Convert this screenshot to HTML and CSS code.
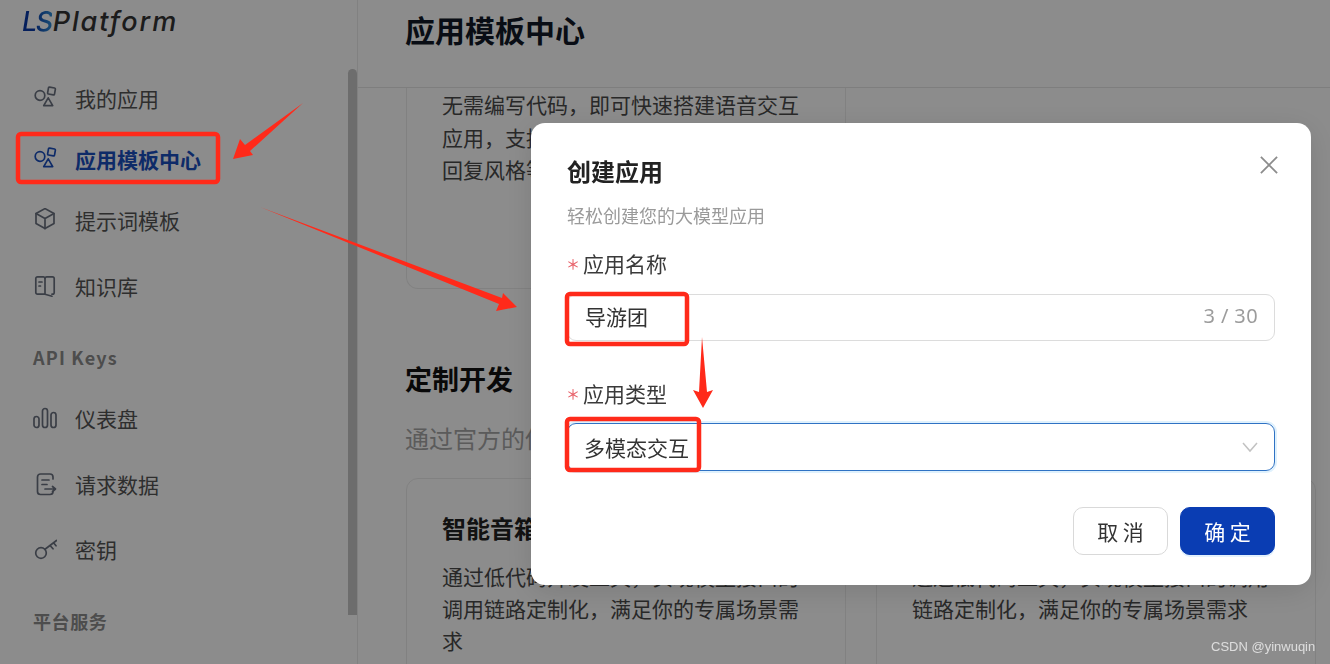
FILE: index.html
```html
<!DOCTYPE html>
<html lang="zh-CN">
<head>
<meta charset="utf-8">
<title>应用模板中心</title>
<link rel="stylesheet" href="styles.css">
</head>
<body>
<div class="app">
  <aside class="sidebar">
    <div class="logo"><span class="logo-ls">LS</span>Platform</div>
    <nav class="nav">
      <a class="item">
        <svg class="icon" viewBox="0 0 24 24"><circle cx="7" cy="9.500" r="4.800"/><rect x="15" y="1.500" width="7" height="7" rx="1" transform="rotate(10 18.500 5)"/><path d="M15.200 11.800l4.500 7.800h-9z"/></svg>
        <span>我的应用</span>
      </a>
      <a class="item active">
        <svg class="icon" viewBox="0 0 24 24"><circle cx="7" cy="9.500" r="4.800"/><rect x="15" y="1.500" width="7" height="7" rx="1" transform="rotate(10 18.500 5)"/><path d="M15.200 11.800l4.500 7.800h-9z"/></svg>
        <span>应用模板中心</span>
      </a>
      <a class="item">
        <svg class="icon" viewBox="0 0 24 24"><path d="M12 .6l9 5v10l-9 5-9-5v-10z"/><path d="M3 5.600l9 5 9-5M12 10.600v10"/></svg>
        <span>提示词模板</span>
      </a>
      <a class="item tall spaced">
        <svg class="icon" viewBox="0 0 24 24"><path d="M12 4.500c0-1 .8-1.700 1.800-1.700h5.700c1 0 1.700.7 1.700 1.700v14c0 1-.7 1.700-1.700 1.700h-.5"/><path d="M19 22.200l-7-2H4.500c-1 0-1.700-.7-1.700-1.700V4.500c0-1 .7-1.700 1.700-1.700h6c1 0 1.500.7 1.500 1.700v15.700"/><path d="M6 8h3M6 12h1.500"/></svg>
        <span>知识库</span>
      </a>
      <div class="group">API Keys</div>
      <a class="item">
        <svg class="icon" viewBox="0 0 24 24"><rect x="1" y="10.500" width="5" height="11" rx="2.500"/><rect x="9.500" y="2.500" width="5" height="19" rx="2.500"/><rect x="18" y="6.500" width="5" height="15" rx="2.500"/></svg>
        <span>仪表盘</span>
      </a>
      <a class="item tall spaced">
        <svg class="icon" viewBox="0 0 24 24"><path d="M20 7V5c0-1.700-1.300-3-3-3H7.500c-1.700 0-3 1.300-3 3v14.500c0 1.700 1.300 3 3 3H17c1.700 0 3-1.300 3-3"/><path d="M9 8h7M9 12.500h5M12 17h10M19.500 14.500L22.500 17l-3 2.500"/></svg>
        <span>请求数据</span>
      </a>
      <a class="item tall lift">
        <svg class="icon" viewBox="0 0 24 24"><circle cx="8" cy="16" r="5.300"/><path d="M12 12.300L23.500 3.500M17 8.500l3 3.300M20.500 5.800l2.500 3"/></svg>
        <span>密钥</span>
      </a>
      <div class="group drop">平台服务</div>
    </nav>
    <div class="scroll-thumb"></div>
  </aside>
  <main class="main">
    <header class="topbar"><h1 class="page-title">应用模板中心</h1></header>
    <div class="content">
      <div class="cards">
        <div class="card cut">
          <p>无需编写代码，即可快速搭建语音交互应用，支持自定义角色、音色、语速和</p>
          <p class="tail">回复风格等</p>
        </div>
      </div>
      <h2 class="section-title">定制开发</h2>
      <p class="section-sub">通过官方的低代</p>
      <div class="cards">
        <div class="card full">
          <h3>智能音箱</h3>
          <p>通过低代码开发工具，实现模型接口的调用链路定制化，满足你的专属场景需求</p>
        </div>
        <div class="card full">
          <h3>智能硬件</h3>
          <p>通过低代码工具，实现模型接口的调用链路定制化，满足你的专属场景需求</p>
        </div>
      </div>
    </div>
  </main>
</div>
<div class="mask"></div>
<section class="modal">
  <svg class="close" viewBox="0 0 20 20"><path d="M1 1l18 18M19 1L1 19"/></svg>
  <h2 class="modal-title">创建应用</h2>
  <p class="modal-sub">轻松创建您的大模型应用</p>
  <div class="label first"><i>＊</i>应用名称</div>
  <div class="field name"><span>导游团</span><span class="count">3 / 30</span></div>
  <div class="label second"><i>＊</i>应用类型</div>
  <div class="field select"><span>多模态交互</span>
    <svg class="chev" viewBox="0 0 16 10"><path d="M1 1l7 8 7-8"/></svg>
  </div>
  <div class="actions">
    <button class="btn">取 消</button>
    <button class="btn primary">确 定</button>
  </div>
</section>
<svg class="marks" viewBox="0 0 1330 664">
  <rect x="18" y="134" width="200" height="48" rx="3"/>
  <rect x="567" y="294" width="120" height="50" rx="3"/>
  <rect x="567" y="419" width="132" height="51" rx="3"/>
  <polygon points="303,103 245,145 240,139 233,159 253,155 250,151"/>
  <polygon points="260,207 502,298 503,293 517,307 496,311 499,304"/>
  <polygon points="702,337 699,392 693,390 703,408 713,390 707,392"/>
</svg>
<div class="watermark">CSDN @yinwuqin</div>
</body>
</html>
```
FILE: styles.css
```css
* { box-sizing: border-box; }
html, body { margin: 0; height: 664px; overflow: hidden; background: #fff; }
body { font-family: "Noto Sans CJK SC", "Liberation Sans", sans-serif; color: #4a4a4a; }
h1, h2, h3, p { margin: 0; }

.app { display: flex; width: 1330px; height: 664px; }

.sidebar { position: relative; flex: 0 0 358px; height: 664px; border-right: 1px solid #ececec; overflow: hidden; }
.logo { height: 67px; padding: 2px 0 0 22px; font: italic 500 27px/40px Inter, sans-serif; letter-spacing: 1.900px; color: #333; }
.logo-ls { background: linear-gradient(90deg, #0a3aa8 0%, #0a3aa8 40%, #2f8fd8 100%); -webkit-background-clip: text; background-clip: text; color: transparent; letter-spacing: -1.500px; margin-right: 1px; }
.nav { display: flex; flex-direction: column; }
.item { display: flex; align-items: center; height: 61px; padding-left: 33px; gap: 18px; font-size: 21px; color: #555; }
.item.tall { height: 66px; }
.item.spaced { margin-top: 3px; }
.item.lift { margin-top: -1px; }
.item.active { color: #1b4fbe; font-weight: 700; }
.icon { width: 24px; height: 24px; flex: none; fill: none; stroke: #6b7280; stroke-width: 1.700; stroke-linejoin: round; stroke-linecap: round; }
.active .icon { stroke: #1b4fbe; }
.group { height: 68px; padding: 8px 0 0 33px; display: flex; align-items: center; font-size: 18px; font-weight: 700; letter-spacing: 1.200px; color: #8c8c8c; }
.group.drop { margin-top: 1px; letter-spacing: .6px; }
.scroll-thumb { position: absolute; left: 348px; top: 69px; width: 9px; height: 546px; border-radius: 5px 5px 0 0; background: #c6c6c6; }

.main { flex: 1; min-width: 0; height: 664px; overflow: hidden; }
.topbar { height: 88px; padding: 8px 0 0 47px; border-bottom: 1px solid #e6e6e6; }
.page-title { font-size: 30px; line-height: 42px; font-weight: 700; color: #111827; }
.content { padding: 0 14px 0 48px; }
.cards { display: grid; grid-template-columns: 440px 440px; gap: 30px; }
.card { border: 1px solid #ececec; border-radius: 12px; padding: 0 35px; font-size: 21px; line-height: 32.500px; color: #4a4a4a; }
.card.cut { height: 201px; border-top: 0; border-radius: 0 0 12px 12px; }
.card.full { height: 260px; padding-top: 32px; line-height: 32px; }
.card h3 { font-size: 24px; line-height: 34px; font-weight: 700; color: #222; margin-bottom: 15px; }
.tail { width: fit-content; }
.section-title { margin: 70px 0 0 -1px; font-size: 27px; line-height: 40px; font-weight: 700; color: #111; }
.section-sub { margin: 21px 0 22px -1px; width: fit-content; font-size: 24px; line-height: 36px; color: #a6a6a6; white-space: nowrap; }

.mask { position: fixed; inset: 0; background: rgba(0, 0, 0, .45); }
.modal { position: fixed; left: 531px; top: 123px; width: 780px; padding: 31px 36px 30px; background: #fff; border-radius: 14px; box-shadow: 0 6px 30px rgba(0, 0, 0, .12); color: #333; }
.close { position: absolute; left: 729px; top: 33px; width: 18px; height: 18px; fill: none; stroke: #8c8c8c; stroke-width: 2; }
.modal-title { font-size: 24px; line-height: 34px; font-weight: 700; color: #222; }
.modal-sub { margin-top: 14px; font-size: 18px; line-height: 26px; color: #9a9a9a; }
.label { font-size: 21px; line-height: 30px; color: #3a3a3a; display: flex; align-items: center; }
.label i { width: 16px; margin-left: -1px; margin-right: 1px; font: 500 14px/30px "Noto Sans CJK SC", sans-serif; color: #e8636b; }
.label.first { margin-top: 20px; }
.label.second { margin-top: 37px; }
.field { display: flex; align-items: center; justify-content: space-between; padding: 0 16px 0 17px; font-size: 21px; color: #333; border: 1px solid #dcdcdc; border-radius: 9px; }
.field.name { margin-top: 16px; height: 47px; padding-bottom: 4px; }
.field.select { margin-top: 15px; height: 48px; padding-left: 16px; border-color: #2f72c4; box-shadow: 0 0 0 2px #dff1fd; }
.count { color: #9c9c9c; letter-spacing: .4px; font-family: "Noto Sans", sans-serif; font-size: 20px; }
.chev { width: 16px; height: 12px; fill: none; stroke: #c2c2c2; stroke-width: 1.500; }
.actions { display: flex; justify-content: flex-end; gap: 12px; margin-top: 36px; }
.btn { width: 95px; height: 48px; border: 1px solid #d9d9d9; border-radius: 10px; background: #fff; color: #333; font: 400 21px/1 "Noto Sans CJK SC", sans-serif; padding: 0; }
.btn.primary { background: #0a3db3; border-color: #0a3db3; color: #fff; box-shadow: 0 2px 0 #e3f1fd; }

.marks { position: fixed; left: 0; top: 0; width: 1330px; height: 664px; pointer-events: none; }
.marks rect { fill: none; stroke: #ff2a1a; stroke-width: 4.500; }
.marks polygon { fill: #ff2a1a; }
.watermark { position: fixed; left: 1211px; top: 638px; font: 13px/18px "Liberation Sans", sans-serif; color: rgba(255, 255, 255, .7); }
```
